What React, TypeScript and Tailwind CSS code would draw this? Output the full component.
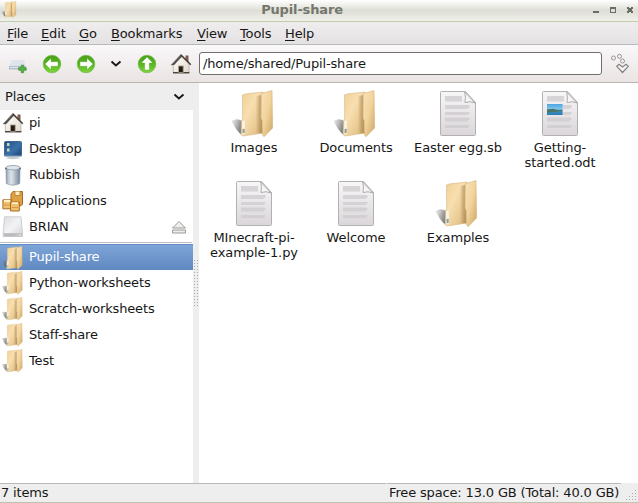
import React from "react";

function Folder({ size }: { size: number }) {
  return (
    <svg width={size} height={size} viewBox="0 0 48 48" className="shrink-0">
      <defs>
        <linearGradient id="fBack" x1="0" y1="0" x2="1" y2="1">
          <stop offset="0" stopColor="#efcf94" />
          <stop offset=".4" stopColor="#f8dfb0" />
          <stop offset="1" stopColor="#dcb778" />
        </linearGradient>
        <linearGradient id="fFront" x1="0" y1="0" x2="1" y2="1">
          <stop offset="0" stopColor="#fae3b8" />
          <stop offset=".5" stopColor="#f1d39c" />
          <stop offset="1" stopColor="#cda566" />
        </linearGradient>
        <linearGradient id="fGap" x1="0" y1="0" x2="1" y2="0">
          <stop offset="0" stopColor="#b9945b" stopOpacity="0" />
          <stop offset=".6" stopColor="#a5834f" stopOpacity=".5" />
          <stop offset="1" stopColor="#94723f" stopOpacity=".6" />
        </linearGradient>
        <linearGradient id="fShade" x1="0" y1="0" x2="1" y2=".5">
          <stop offset="0" stopColor="#888" stopOpacity=".15" />
          <stop offset="1" stopColor="#555" stopOpacity=".8" />
        </linearGradient>
      </defs>
      <path d="M1.5 31 Q7 27.5 12 31 L12 45 Q9 43 6 39 Z" fill="url(#fShade)" />
      <path d="M12.5 5 L15 4 L33 2 L33 43 L13 46 L11 44.5 L11.5 31 L12.7 28 Z" fill="url(#fBack)" stroke="#d6b67f" strokeWidth=".6" />
      <path d="M25.5 6 L32 5 L32 43.2 L27 43.5 L25.5 43.5 Z" fill="url(#fGap)" />
      <path d="M31.2 4.5 L33 3.2 L42 0.6 L42.6 38 L34 46.7 L32.6 45 L32.2 31 L31 28 Z" fill="url(#fFront)" stroke="#d3b078" strokeWidth=".6" />
      <path d="M12.3 31 L14.8 30.5 L15 44 L12 44.5 Z" fill="#f5f3ea" />
      <path d="M12.5 39 L14.7 38.7 L14.7 43 L12.5 43.3 Z" fill="#8fa0a2" />
    </svg>
  );
}

function Doc({ picture }: { picture?: boolean }) {
  return (
    <svg width="48" height="48" viewBox="0 0 48 48" className="shrink-0">
      <defs>
        <linearGradient id="paper" x1="0" y1="0" x2="0" y2="1">
          <stop offset="0" stopColor="#f8f7f8" />
          <stop offset="1" stopColor="#dad6d9" />
        </linearGradient>
        <linearGradient id="curl" x1="0" y1="1" x2="1" y2="0">
          <stop offset="0" stopColor="#fff" />
          <stop offset=".6" stopColor="#f0eeef" />
          <stop offset="1" stopColor="#bbb" />
        </linearGradient>
        <linearGradient id="photo" x1="0" y1="0" x2="0" y2="1">
          <stop offset="0" stopColor="#4aa5e3" />
          <stop offset=".45" stopColor="#80c4ea" />
          <stop offset=".6" stopColor="#3f8fb4" />
          <stop offset="1" stopColor="#287db8" />
        </linearGradient>
      </defs>
      <path d="M7.5 1.5 H31.5 L41.5 12.5 V44.5 Q41.5 45.5 40.5 45.5 H7.5 Q6.5 45.5 6.5 44.5 V2.5 Q6.5 1.5 7.5 1.5Z" fill="url(#paper)" stroke="#b3b0b2" />
      <path d="M11 6 H28 V11.5 H11Z M11 15 H35 L36 17 L33 19 H11Z M11 22 H36 L34 25 H11Z M11 27.5 H34 L36 29 L33 31.5 H11Z M11 35 H36 L34 38 H11Z" fill="#cdcacd" opacity=".75" />
      <path d="M30.7 2 Q32 7 31 12.5 Q36 10.7 41.2 13Z" fill="url(#curl)" stroke="#9b999a" strokeWidth=".8" />
      {picture && (
        <>
          <path d="M11 14 H26.5 V25 H11Z" fill="url(#photo)" />
          <path d="M11 19.5 L17 18.8 L22 20.3 L26.5 20 V21 L11 22.5Z" fill="#4a7562" />
        </>
      )}
    </svg>
  );
}

function House() {
  return (
    <svg width="22" height="22" viewBox="0 0 22 22" className="shrink-0">
      <defs><linearGradient id="wall" x2="1" y2="1"><stop stopColor="#fff" /><stop offset="1" stopColor="#e0d8cb" /></linearGradient></defs>
      <path d="M15.5 2.5 H18.5 V9 L15.5 7Z" fill="#7d5b4d" />
      <path d="M3.3 11 L11 3.5 L19 10.5 V19.5 H3.3Z" fill="url(#wall)" stroke="#b0a797" strokeWidth=".7" />
      <path d="M3 19.8 H19.4" stroke="#2c2925" strokeWidth="1.2" />
      <path d="M.7 12.2 L10.8 1.3 L12.3 3.3 L4.2 12Z" fill="#54504b" />
      <path d="M10.8 1.7 L20.8 11.8" fill="none" stroke="#403c38" strokeWidth="1.5" />
      <path d="M2.3 10.8 L10.6 2" stroke="#8d8983" strokeWidth=".7" />
      <rect x="8.6" y="13" width="4.6" height="6.5" fill="#211e1a" stroke="#b19e85" strokeWidth=".8" />
    </svg>
  );
}

function DesktopIcon() {
  return (
    <svg width="22" height="22" viewBox="0 0 22 22" className="shrink-0">
      <defs><linearGradient id="screen" x1="0" y1="0" x2="1" y2="1"><stop stopColor="#1f5085" /><stop offset=".55" stopColor="#3a72a8" /><stop offset="1" stopColor="#1b4474" /></linearGradient></defs>
      <ellipse cx="11" cy="20" rx="7" ry="1.2" fill="#c6cbd2" />
      <rect x="2.5" y="3.5" width="17" height="14.5" rx="1" fill="url(#screen)" stroke="#3a608c" strokeWidth=".9" />
      <path d="M2.5 18.3 H19.5" stroke="#a3b4c8" strokeWidth="1.3" />
      <path d="M5 5 H7.5 V8 H5Z M5 10.5 H7.5 V13.5 H5Z" fill="#cfd3b8" />
    </svg>
  );
}

function Bin() {
  return (
    <svg width="22" height="22" viewBox="0 0 22 22" className="shrink-0">
      <defs><linearGradient id="bin"><stop stopColor="#8795a5" /><stop offset=".3" stopColor="#e9eef3" /><stop offset=".65" stopColor="#b4c0cc" /><stop offset="1" stopColor="#718194" /></linearGradient></defs>
      <path d="M4 4 L4.3 19.5 Q11 22.8 17.7 19.5 L18 4Z" fill="url(#bin)" stroke="#8a97a5" strokeWidth=".7" />
      <path d="M8 7 V20 M14 7 V20" stroke="#9caab8" strokeWidth=".5" />
      <ellipse cx="11" cy="3.7" rx="7.2" ry="2.2" fill="#dfe5eb" stroke="#8997a5" strokeWidth=".8" />
      <path d="M3.2 4.5 H4.5 M17.5 4.5 H18.8" stroke="#445362" strokeWidth="1.6" />
    </svg>
  );
}

function Boxes() {
  const box = "M.7 1 H9.5 V10 H.7Z";
  return (
    <svg width="22" height="22" viewBox="0 0 22 22" className="shrink-0">
      <path d="M11 1.5 H20.5 V14.5 L18 16 H9 V4Z" fill="#dea143" stroke="#a76a22" />
      <path d="M13 1.5 V5.5 H18 V1.5" fill="#fdeac0" stroke="#b07930" strokeWidth=".8" />
      <g fill="#f0c06c" stroke="#a66e24"><path d={box} transform="translate(.2 8.8)" /><path d={box} transform="translate(7.8 11)" /></g>
      <path d="M2 11 H8 M10 13.2 H16" stroke="#fff0c8" strokeWidth="1.8" />
      <path d="M2 15 H8 M10 17.5 H16" stroke="#d29a48" />
    </svg>
  );
}

function Drive() {
  return (
    <svg width="22" height="22" viewBox="0 0 22 22" className="shrink-0">
      <defs><linearGradient id="drive" x2="1" y2="1"><stop stopColor="#dddce0" /><stop offset=".5" stopColor="#f3f3f5" /><stop offset="1" stopColor="#d2d1d6" /></linearGradient></defs>
      <path d="M2.5 .8 H19 L20.4 16 V20.5 H1.2 V16Z" fill="url(#drive)" stroke="#c6c5ca" strokeWidth=".8" />
      <path d="M1.2 17 H20.4 V20.7 H1.2Z" fill="#c4c3c7" />
      <path d="M3 19 H13" stroke="#adacb0" strokeWidth=".8" /><path d="M17 19 H19" stroke="#eee" />
    </svg>
  );
}

function RoundArrow({ dir }: { dir: "left" | "right" | "up" }) {
  const angle = { left: 0, right: 180, up: 90 }[dir];
  return (
    <svg width="20" height="20" viewBox="0 0 20 20" className="shrink-0">
      <defs><linearGradient id="green" x2="0" y2="1"><stop stopColor="#48a018" /><stop offset=".5" stopColor="#58b41f" /><stop offset="1" stopColor="#80d63a" /></linearGradient></defs>
      <circle cx="10" cy="10" r="8.8" fill="url(#green)" stroke="#6fb94a" strokeWidth=".7" />
      <path d="M3 10 L9 4.2 V7.7 H16 V12.3 H9 V15.8Z" fill="#fff" stroke="#59a632" strokeWidth=".4" transform={`rotate(${angle} 10 10)`} />
    </svg>
  );
}

function Chevron() {
  return <svg width="12" height="8" viewBox="0 0 12 8" className="shrink-0"><path d="M1.5 1.5 L5.9 5.5 L10.5 1.5" fill="none" stroke="#171717" strokeWidth="1.9" /></svg>;
}

const menus: [string, string][] = [["File", "w-[34px]"], ["Edit", "w-[38px]"], ["Go", "w-[32px]"], ["Bookmarks", "w-[86px]"], ["View", "w-[43px]"], ["Tools", "w-[45px]"], ["Help", "w-[40px]"]];
const places = [
  { name: "pi", icon: <House /> },
  { name: "Desktop", icon: <DesktopIcon /> },
  { name: "Rubbish", icon: <Bin /> },
  { name: "Applications", icon: <Boxes /> },
  { name: "BRIAN", icon: <Drive /> },
];
const bookmarks = ["Pupil-share", "Python-worksheets", "Scratch-worksheets", "Staff-share", "Test"];
const files = [
  { lines: ["Images"], kind: "folder" },
  { lines: ["Documents"], kind: "folder" },
  { lines: ["Easter egg.sb"], kind: "doc" },
  { lines: ["Getting-", "started.odt"], kind: "odt" },
  { lines: ["MInecraft-pi-", "example-1.py"], kind: "doc" },
  { lines: ["Welcome"], kind: "doc" },
  { lines: ["Examples"], kind: "folder" },
];

export default function App() {
  return (
    <div className="flex h-[503px] w-[638px] flex-col overflow-hidden bg-[#eeeeee] font-['DejaVu_Sans',sans-serif] text-[13px] leading-[15px] tracking-[-0.15px] text-[#171717]">
      <header className="grid h-[22px] shrink-0 grid-cols-[32px_1fr_60px] items-center border-b border-[#c2cbb0] bg-linear-to-b from-white via-[#deded7] to-[#f0f0ea]">
        <div className="pb-0.5 pl-px"><Folder size={17} /></div>
        <div className="pr-[6px] pb-[3px] text-center font-bold text-[#74776c]">Pupil-share</div>
        <svg width="60" height="21" viewBox="0 0 60 21" fill="none" stroke="#696d66" shapeRendering="crispEdges">
          <path d="M15 12 H21" strokeWidth="2" /><path d="M32.5 8.5 H37.5 V12.5 H32.5Z M32 7.5 H38" /><path d="M49 7 H51 V8 H53 V7 H55 V9 H54 V11 H55 V13 H53 V12 H51 V13 H49 V11 H50 V9 H49Z" fill="#696d66" stroke="none" />
        </svg>
      </header>
      <nav className="flex h-[23px] shrink-0 items-center border-b border-[#bababa] bg-linear-to-b from-[#f0edef] to-[#e3e2e2] pl-[7px]">
        {menus.map(([label, width], i) => <span key={i} className={width}><span className="underline underline-offset-2">{label[0]}</span>{label.slice(1)}</span>)}
      </nav>
      <div className="flex h-[38px] shrink-0 items-center border-b border-[#b9b5b5] bg-linear-to-b from-[#faf8fa] to-[#eae4e3]">
        <svg width="24" height="22" viewBox="0 0 24 22" className="ml-[7px] shrink-0">
          <path d="M5 7 H17 L18.5 13 V16 H2 V13Z" fill="#dfe3ea" /><path d="M2 13 H18.5 V16.5 H2Z" fill="#b3bece" /><path d="M3 14.5 H11" stroke="#dfe5ee" />
          <path d="M14.2 12.2 H16.7 V14.7 H19.2 V17.2 H16.7 V19.7 H14.2 V17.2 H11.7 V14.7 H14.2Z" fill="#58b345" stroke="#3f9433" strokeWidth=".8" />
        </svg>
        <div className="ml-[11px]"><RoundArrow dir="left" /></div>
        <div className="ml-[14px]"><RoundArrow dir="right" /></div>
        <div className="ml-[14px]"><Chevron /></div>
        <div className="ml-[15px]"><RoundArrow dir="up" /></div>
        <div className="ml-[13px]"><House /></div>
        <div className="ml-[7px] flex h-[23px] w-[403px] items-center rounded-[3px] border border-[#726e6e] bg-white pl-[3px]">/home/shared/Pupil-share</div>
        <svg width="22" height="23" viewBox="0 0 22 23" className="ml-[8px]" fill="#f4f2f1" stroke="#999696">
          <circle cx="3.5" cy="6" r="2" /><circle cx="9.5" cy="4.3" r="2" /><circle cx="12.5" cy="9" r="2" /><path d="M6.8 14.3 L9 12.3 L12.5 15 L16 12.3 L18.3 14.3 L12.5 20.5Z" stroke="#858282" strokeWidth="1.2" />
        </svg>
      </div>
      <main className="flex min-h-0 flex-1">
        <aside className="w-[193px] bg-white">
          <div className="flex h-[27px] items-center justify-between bg-[#eeeeee] pr-[8px] pl-[5px]"><span>Places</span><Chevron /></div>
          {places.map((p) => <div key={p.name} className="flex h-[26px] items-center pl-[2px]">{p.icon}<span className="ml-[5px] pb-[2px]">{p.name}</span>{p.name === "BRIAN" && <svg width="16" height="15" viewBox="0 0 16 15" className="mr-[6px] ml-auto"><path d="M1.5 8 L8 1.5 L14.5 8Z M1.5 10 H14.5 V13 H1.5Z" fill="#eeeeec" stroke="#999996" /></svg>}</div>)}
          <div className="flex h-[4px] items-center"><div className="h-px w-[192px] bg-[#bcbcbc]" /></div>
          {bookmarks.map((name, i) => <div key={name} className={i === 0 ? "flex h-[26px] items-center border-t border-[#5f8cc5] bg-linear-to-b from-[#7ea5d8] to-[#6089c1] pl-px text-white" : "flex h-[26px] items-center pl-px"}><Folder size={24} /><span className="ml-[4px] pb-[2px]">{name}</span></div>)}
        </aside>
        <div className="flex w-[6px] flex-col bg-[#eeeeee] pt-[176px]"><svg width="6" height="48" fill="#aaa"><defs><pattern id="grip" width="3" height="3" patternUnits="userSpaceOnUse"><rect x="1" y="1" width="1" height="1" /></pattern></defs><rect width="6" height="48" fill="url(#grip)" /></svg></div>
        <section className="grid flex-1 grid-cols-[repeat(4,102px)] grid-rows-[90px_90px] content-start bg-white pt-[7px] pl-[4px] tracking-[-0.1px]">
          {files.map((f) => <div key={f.lines[0]} className="flex flex-col items-center whitespace-nowrap">{f.kind === "folder" ? <Folder size={48} /> : <Doc picture={f.kind === "odt"} />}<div className="mt-[2px] text-center">{f.lines.map((line) => <div key={line}>{line}</div>)}</div></div>)}
        </section>
      </main>
      <footer className="flex h-[20px] shrink-0 border-b border-[#bdc4aa] bg-[#eeeeee]">
        <div className="w-[386px] border-t border-[#b9b9b9] pt-px pl-px">7 items</div>
        <div className="ml-px w-[234px] border-t border-[#b9b9b9] pt-px pl-[2px] whitespace-nowrap">Free space: 13.0 GB (Total: 40.0 GB)</div>
        <svg width="14" height="19" className="ml-auto" fill="#aaa"><path d="M11 7h1v1h-1z M8 10h1v1H8z M11 10h1v1h-1z M5 13h1v1H5z M8 13h1v1H8z M11 13h1v1h-1z M2 16h1v1H2z M5 16h1v1H5z M8 16h1v1H8z M11 16h1v1h-1z" /></svg>
      </footer>
    </div>
  );
}
